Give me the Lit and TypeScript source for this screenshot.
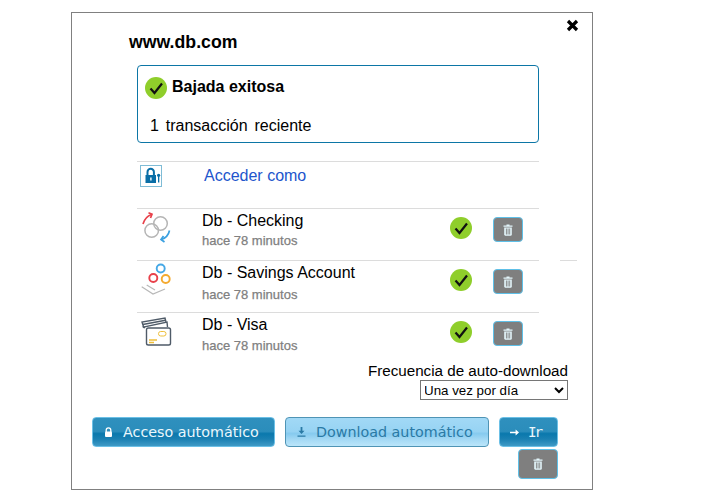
import { LitElement, html, css, svg } from "lit";
import { customElement } from "lit/decorators.js";

const check = html`<svg class="check" viewBox="0 0 22 22"><circle cx="11" cy="11" r="11" fill="#8fce2b"/><path d="M5.5 11.5 L9.5 16 L17 6.5" fill="none" stroke="#111" stroke-width="2.2"/></svg>`;
const trash = html`<svg class="tr" viewBox="0 0 10 12"><path d="M3.5 1.6V.6h3v1h3v1.2H.5V1.6z" fill="#e4f6fb"/><path fill-rule="evenodd" d="M1.2 3.4h7.6v7.1c0 .8-.5 1.2-1.1 1.2H2.3c-.6 0-1.1-.4-1.1-1.2zM2.9 4.6v5.9h.9V4.6zm1.7 0v5.9h.9V4.6zm1.7 0v5.9h.9V4.6z" fill="#e4f6fb"/></svg>`;
const rings = svg`<g fill="none" stroke-width="1.5"><circle cx="10.7" cy="18.5" r="6.8" stroke="#b5b5b5"/><circle cx="19.5" cy="11.5" r="6.8" stroke="#b5b5b5"/><path d="M2 12C3.5 7 6 4 10.5 2.5" stroke="#e8404a" stroke-width="1.7"/><path d="M7.5 .8 L11 2.3 L9.5 6" stroke="#e8404a" stroke-width="1.7"/><path d="M28.5 18.5C27.5 23 25 26 20.5 27.5" stroke="#3aa0e0" stroke-width="1.7"/><path d="M23.5 30 L20 27.5 L22.5 24" stroke="#3aa0e0" stroke-width="1.7"/></g>`;
const dots = svg`<g fill="none" stroke-width="1.9"><circle cx="19.7" cy="4.5" r="4" stroke="#45a8e6"/><circle cx="12.3" cy="14" r="4" stroke="#e8404a"/><circle cx="24.7" cy="15" r="4" stroke="#f4a92e"/><path d="M.7 22.7L12 30 24 25M5.7 21L14 26" stroke="#b8b8b8" stroke-width="1.2"/></g>`;
const cards = svg`<g fill="none" stroke="#4f5b68" stroke-width="1.4"><path d="M3 12 L1 6 L24 2 L25 6"/><path d="M1.8 8.5 L24.5 4.2"/><path d="M4 12 L2.5 11 L26 6 L26.5 11"/><rect x="5.5" y="12" width="24" height="17" rx="1.8" fill="#fff"/><path d="M8 24h8M8 26.5h5" stroke="#eebf3c" stroke-width="1.3"/><rect x="17.5" y="15.5" width="7.5" height="4.5" rx="2.2" stroke="#eebf3c" stroke-width="1"/></g>`;

const rows = [
  { name: "Db - Checking", icon: rings, cls: "r1" },
  { name: "Db - Savings Account", icon: dots, cls: "r2" },
  { name: "Db - Visa", icon: cards, cls: "r3" },
];

@customElement("app-root")
export class AppRoot extends LitElement {
  static styles = css`
    :host { display: block; font-family: "Liberation Sans", Arial, sans-serif; color: #000; }
    .dialog { position: relative; box-sizing: border-box; width: 522px; height: 478px; margin: 12px 0 0 71px; border: 1px solid #808080; background: #fff; padding: 19px 0 0 0; }
    .close { position: absolute; left: 494px; top: 6px; width: 13px; height: 13px; }
    h1 { margin: 0 0 0 57px; font-size: 17.7px; line-height: 20px; font-weight: bold; }
    .body { width: 402px; margin: 13px 0 0 65px; }
    .status { box-sizing: border-box; height: 78px; border: 1px solid #0c76a6; border-radius: 4px; padding: 10px 0 0 7px; }
    .st-head { display: flex; align-items: center; gap: 5px; font-size: 16px; font-weight: bold; height: 24px; }
    .st-head span { position: relative; top: -1px; }
    .st-sub { margin: 17px 0 0 5px; font-size: 16px; line-height: 18px; white-space: pre; word-spacing: -1px; }
    .login { margin-top: 18px; height: 46px; border-top: 1px solid #dcdcdc; display: grid; grid-template-columns: 67px 1fr; box-sizing: content-box; }
    .lock-box { box-sizing: border-box; margin: 3px 0 0 3px; width: 22px; height: 22px; border: 1px solid #7fbcd6; }
    .lock-box svg { display: block; }
    .login a { color: #2255cc; font-size: 16px; line-height: 18px; padding-top: 5px; text-decoration: none; }
    .row { border-top: 1px solid #dcdcdc; height: 51px; display: grid; grid-template-columns: 65px 248px 43px 30px; }
    .row .ic { width: 34px; height: 34px; margin: 3px 0 0 4px; overflow: visible; }
    .row.r3 { height: 44px; }
    .nm { font-size: 16px; line-height: 18px; margin-top: 3px; }
    .ago { font-size: 13px; color: #808080; -webkit-text-stroke: 0.25px #808080; line-height: 15px; margin-top: 3px; }
    .row.r2 .ago { margin-top: 5px; }
    .row.r3 .ago { margin-top: 4px; }
    .check { width: 22px; height: 22px; display: block; }
    .row .check { margin-top: 8px; }
    .trash { box-sizing: border-box; background: #7f7f7f; border: 1.5px solid #5ec0e8; border-radius: 4px; display: flex; align-items: center; justify-content: center; padding: 0; }
    .row .trash { width: 30px; height: 25px; margin-top: 8px; }
    .tr { width: 10px; height: 12px; display: block; }
    .freq { margin: 0 24px 0 0; display: flex; flex-direction: column; align-items: flex-end; }
    .freq label { font-size: 15.2px; line-height: 17px; margin-top: 5px; }
    .freq select { width: 148px; height: 20px; font-family: "Liberation Sans", Arial, sans-serif; font-size: 13.33px; background: #fff; border: 1px solid #767676; margin-top: 1px; padding: 0; border-radius: 0; color: #000; text-indent: -1px; }
    .actions { display: flex; flex-wrap: wrap; justify-content: flex-end; margin: 17px 0 0 20px; width: 466px; column-gap: 10px; row-gap: 2px; }
    .btn { box-sizing: border-box; height: 30px; border-radius: 4px; font-family: "DejaVu Sans", Verdana, sans-serif; font-size: 14.3px; padding: 0; display: flex; align-items: center; white-space: pre; }
    .btn.dark { color: #eaf7fc; border: 1px solid #6cc0e6; background: linear-gradient(#2f90be 0%, #2b8dbb 48%, #0a78ad 56%, #1a80b2 75%, #3f9ac6 100%); }
    .btn.light { color: #2a7aa5; border: 1px solid #4f94b5; background: linear-gradient(#a2d9f6 0%, #97d3f3 48%, #86caef 56%, #a2d8f4 75%, #bbe5fa 100%); }
    .btn svg { flex: none; display: block; }
    .b1 { width: 183px; padding-left: 11px; gap: 10px; }
    .b2 { width: 204px; padding-left: 11px; gap: 10px; }
    .b3 { width: 59px; padding-left: 10px; gap: 9px; }
    .b3 span { font-family: "DejaVu Sans Mono", monospace; letter-spacing: -2px; }
    .b4 { width: 40px; height: 30px; }
    .dash { position: absolute; left: 488px; top: 247px; width: 17px; height: 1px; background: #dcdcdc; }
  `;

  render() {
    return html`
      <div class="dialog">
        <svg class="close" viewBox="0 0 13 13"><path d="M2 2 L11 11 M11 2 L2 11" stroke="#000" stroke-width="3.2"/></svg>
        <h1>www.db.com</h1>
        <div class="body">
          <div class="status">
            <div class="st-head">${check}<span>Bajada exitosa</span></div>
            <div class="st-sub">1  transacción  reciente</div>
          </div>
          <div class="login">
            <div class="lock-box">
              <svg width="20" height="20" viewBox="0 0 20 20"><path d="M6.5 9.5V6a3.2 3.2 0 0 1 6.4 0v3.5" fill="none" stroke="#0a6ea6" stroke-width="2"/><rect x="4.5" y="9" width="10.5" height="8" fill="#0a6ea6"/><rect x="9.2" y="11.5" width="1.4" height="3" fill="#fff"/><circle cx="17.6" cy="9.3" r="1.6" fill="#0a6ea6"/><rect x="17" y="9.5" width="1.3" height="7" fill="#0a6ea6"/></svg>
            </div>
            <a href="#">Acceder como</a>
          </div>
          ${rows.map(
            (r) => html`
              <div class="row ${r.cls}">
                <svg class="ic" viewBox="0 0 34 34">${r.icon}</svg>
                <div>
                  <div class="nm">${r.name}</div>
                  <div class="ago">hace 78 minutos</div>
                </div>
                ${check}
                <button class="trash">${trash}</button>
              </div>
            `
          )}
        </div>
        <div class="dash"></div>
        <div class="freq">
          <label>Frecuencia de auto-download</label>
          <select><option>Una vez por día</option></select>
        </div>
        <div class="actions">
          <button class="btn dark b1">
            <svg width="9" height="11" viewBox="0 0 9 11"><path d="M2.2 5V3.2a2.3 2.3 0 0 1 4.6 0V5" fill="none" stroke="#fff" stroke-width="1.3"/><rect x="1" y="4.6" width="7" height="5.4" rx="1" fill="#fff"/></svg><span>Acceso automático</span>
          </button>
          <button class="btn light b2">
            <svg width="9" height="10" viewBox="0 0 9 10"><path d="M3.6 0h1.8v3.8H7.5L4.5 7 1.5 3.8h2.1zM.5 8.5h8v1.2h-8z" fill="#2a7aa5"/></svg><span>Download automático</span>
          </button>
          <button class="btn dark b3">
            <svg width="9" height="7" viewBox="0 0 9 7"><path d="M0 2.7h5.6V.5L9 3.5 5.6 6.5V4.3H0z" fill="#fff"/></svg><span>Ir</span>
          </button>
          <button class="trash btn b4">${trash}</button>
        </div>
      </div>
    `;
  }
}
